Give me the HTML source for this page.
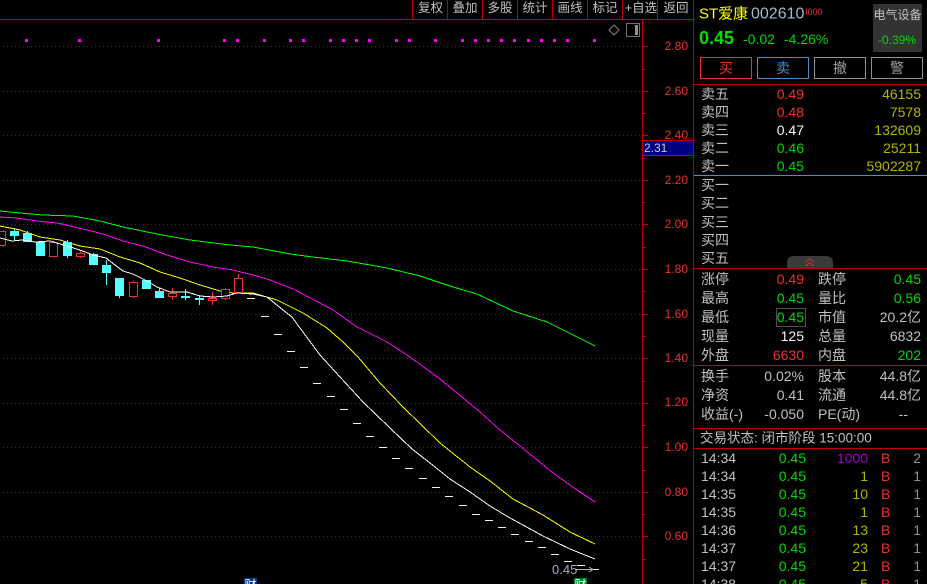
<!DOCTYPE html>
<html><head><meta charset="utf-8"><style>
html,body{margin:0;padding:0;background:#000;width:927px;height:584px;overflow:hidden}
svg{display:block}
text{font-family:"Liberation Sans","Noto Sans CJK SC",sans-serif;font-size:14px;dominant-baseline:central;fill:#c0c0c0}
.r{fill:#f03030}.g{fill:#00d800}.y{fill:#b4b400}.w{fill:#f4f4f4}.e{text-anchor:end}.c{text-anchor:middle}
.ax{font-size:12px;fill:#e83030;text-anchor:end}
.tab{font-size:12.5px;text-anchor:middle}
.l{fill:none;stroke-width:1}
.grid line{stroke:#a00000;stroke-width:1;stroke-dasharray:1 3}
.ln line,.ln path{stroke:#c00000;stroke-width:1}
.up rect{fill:#000;stroke:#f03030;stroke-width:1}
.up line{stroke:#f03030}
.dn rect{fill:#55ffff}
.dn line{stroke:#55ffff}
.d{fill:#f0f0f0}
.m{fill:#ff00ff}
</style></head><body>
<svg width="927" height="584" viewBox="0 0 927 584" shape-rendering="crispEdges">
<rect width="927" height="584" fill="#000"/>
<g class="grid">
<line x1="3" x2="642" y1="46.5" y2="46.5"/><line x1="3" x2="642" y1="91.5" y2="91.5"/><line x1="3" x2="642" y1="135.5" y2="135.5"/><line x1="3" x2="642" y1="180.5" y2="180.5"/><line x1="3" x2="642" y1="224.5" y2="224.5"/><line x1="3" x2="642" y1="269.5" y2="269.5"/><line x1="3" x2="642" y1="314.5" y2="314.5"/><line x1="3" x2="642" y1="358.5" y2="358.5"/><line x1="3" x2="642" y1="403.5" y2="403.5"/><line x1="3" x2="642" y1="447.5" y2="447.5"/><line x1="3" x2="642" y1="492.5" y2="492.5"/><line x1="3" x2="642" y1="536.5" y2="536.5"/>
</g>
<g class="m">
<rect x="25" y="39" width="3" height="3"/><rect x="78" y="39" width="3" height="3"/><rect x="157" y="39" width="3" height="3"/><rect x="223" y="39" width="3" height="3"/><rect x="236" y="39" width="3" height="3"/><rect x="263" y="39" width="3" height="3"/><rect x="289" y="39" width="3" height="3"/><rect x="302" y="39" width="3" height="3"/><rect x="329" y="39" width="3" height="3"/><rect x="342" y="39" width="3" height="3"/><rect x="355" y="39" width="3" height="3"/><rect x="368" y="39" width="3" height="3"/><rect x="395" y="39" width="3" height="3"/><rect x="408" y="39" width="3" height="3"/><rect x="434" y="39" width="3" height="3"/><rect x="461" y="39" width="3" height="3"/><rect x="474" y="39" width="3" height="3"/><rect x="487" y="39" width="3" height="3"/><rect x="500" y="39" width="3" height="3"/><rect x="513" y="39" width="3" height="3"/><rect x="527" y="39" width="3" height="3"/><rect x="540" y="39" width="3" height="3"/><rect x="553" y="39" width="3" height="3"/><rect x="566" y="39" width="3" height="3"/><rect x="593" y="39" width="3" height="3"/>
</g>
<polyline class="l" stroke="#00ff00" points="0,211 20,213 43,215 73,216 100,221 123,227 157,234 190,240 230,245 253,247 280,252 290,254 313,257 347,261 387,268 420,276 453,287 477,294 513,311 547,322 595,346"/>
<polyline class="l" stroke="#ff00ff" points="0,217 17,218 37,221 57,223 83,229 103,234 123,241 143,246 167,255 190,262 213,267 233,270 257,276 270,280 293,289 333,310 357,327 387,342 410,357 440,379 480,412 500,430 525,450 553,473 577,490 595,502"/>
<polyline class="l" stroke="#ffff00" points="0,226 20,230 40,237 60,240 80,246 100,249 120,257 140,263 160,272 180,278 200,285 220,291 233,293 253,293 277,300 303,313 327,328 343,342 358,357 380,383 403,407 440,443 450,451 470,467 490,481 513,499 543,515 570,532 595,544"/>
<g class="up">
<line x1="3.5" x2="3.5" y1="230" y2="247"/><rect x="-4.5" y="231.5" width="10" height="14"/>
<line x1="53.5" x2="53.5" y1="241" y2="257"/><rect x="49.5" y="242.5" width="8" height="14"/>
<line x1="80.5" x2="80.5" y1="251" y2="258"/><rect x="76.5" y="253.5" width="8" height="3"/>
<line x1="133.5" x2="133.5" y1="281" y2="298"/><rect x="129.5" y="282.5" width="8" height="14"/>
<line x1="172.5" x2="172.5" y1="288" y2="300"/><rect x="168.5" y="293.5" width="8" height="3"/>
<line x1="212.5" x2="212.5" y1="292" y2="305"/><rect x="208.5" y="298.5" width="8" height="2"/>
<line x1="225.5" x2="225.5" y1="288" y2="300"/><rect x="221.5" y="289.5" width="8" height="9"/>
<line x1="238.5" x2="238.5" y1="274" y2="278"/><rect x="234.5" y="278.5" width="8" height="14"/>
</g>
<g class="dn">
<line x1="14.5" x2="14.5" y1="228" y2="240"/><rect x="10" y="231" width="9" height="5"/>
<rect x="23" y="233" width="9" height="9"/><line x1="27.5" x2="27.5" y1="231" y2="242"/>
<rect x="36" y="242" width="9" height="14"/>
<line x1="67.5" x2="67.5" y1="240" y2="258"/><rect x="63" y="242" width="9" height="14"/>
<line x1="93.5" x2="93.5" y1="253" y2="265"/><rect x="89" y="254" width="9" height="11"/>
<line x1="106.5" x2="106.5" y1="260" y2="285"/><rect x="102" y="265" width="9" height="8"/>
<line x1="119.5" x2="119.5" y1="278" y2="298"/><rect x="115" y="278" width="9" height="18"/>
<rect x="142" y="280" width="9" height="9"/>
<line x1="159.5" x2="159.5" y1="288" y2="298"/><rect x="155" y="291" width="9" height="7"/>
<line x1="185.5" x2="185.5" y1="289" y2="300"/><rect x="181" y="296" width="9" height="2"/>
<line x1="199.5" x2="199.5" y1="296" y2="305"/><rect x="195" y="298" width="9" height="2"/>
</g>
<polyline class="l" stroke="#ffffff" points="0,238 12,241 22,240 35,242 50,241 67,246 80,250 93,255 106,258 115,265 123,271 133,274 147,281 157,287 170,292 187,292 200,296 213,297 227,296 237,293 253,294 267,297 283,310 292,317 300,328 320,355 340,377 363,402 390,428 412,449 430,463 450,479 470,492 490,506 510,518 543,536 570,549 595,559"/>
<g class="d">
<rect x="247" y="298" width="8" height="1"/><rect x="261" y="316" width="8" height="1"/><rect x="274" y="334" width="8" height="1"/><rect x="287" y="351" width="8" height="1"/><rect x="300" y="367" width="8" height="1"/><rect x="313" y="383" width="8" height="1"/><rect x="327" y="396" width="8" height="1"/><rect x="340" y="409" width="8" height="1"/><rect x="353" y="423" width="8" height="1"/><rect x="366" y="436" width="8" height="1"/><rect x="379" y="447" width="8" height="1"/><rect x="392" y="458" width="8" height="1"/><rect x="405" y="468" width="8" height="1"/><rect x="419" y="478" width="8" height="1"/><rect x="432" y="487" width="8" height="1"/><rect x="445" y="496" width="8" height="1"/><rect x="459" y="505" width="8" height="1"/><rect x="472" y="514" width="8" height="1"/><rect x="485" y="520" width="8" height="1"/><rect x="498" y="527" width="8" height="1"/><rect x="511" y="534" width="8" height="1"/><rect x="525" y="541" width="8" height="1"/><rect x="538" y="547" width="8" height="1"/><rect x="551" y="554" width="8" height="1"/><rect x="564" y="561" width="8" height="1"/><rect x="577" y="565" width="8" height="1"/><rect x="590" y="569" width="9" height="1"/>
</g>
<text x="552" y="569.5" style="font-size:13px;fill:#9fb0c4">0.45</text>
<path d="M575 569.5H592M589 567L593 569.5L589 572" fill="none" stroke="#b0b0b0" stroke-width="1" shape-rendering="auto"/>
<rect x="244" y="578" width="13" height="6" fill="#003a80"/>
<text x="250.5" y="585" class="c" style="font-size:12px;fill:#fff">财</text>
<rect x="574" y="578" width="13" height="6" fill="#008020"/>
<text x="580.5" y="585" class="c" style="font-size:12px;fill:#fff">财</text>

<g class="ln">
<line x1="0" x2="693" y1="19.5" y2="19.5"/>
<line x1="642.5" x2="642.5" y1="19" y2="584"/>
<line x1="693.5" x2="693.5" y1="0" y2="584"/>
<line x1="412.5" x2="412.5" y1="0" y2="19"/><line x1="447.5" x2="447.5" y1="0" y2="19"/><line x1="482.5" x2="482.5" y1="0" y2="19"/><line x1="517.5" x2="517.5" y1="0" y2="19"/><line x1="552.5" x2="552.5" y1="0" y2="19"/><line x1="587.5" x2="587.5" y1="0" y2="19"/><line x1="622.5" x2="622.5" y1="0" y2="19"/><line x1="657.5" x2="657.5" y1="0" y2="19"/>
<line x1="643" x2="648" y1="46.5" y2="46.5"/><line x1="643" x2="646" y1="69.5" y2="69.5"/><line x1="643" x2="648" y1="91.5" y2="91.5"/><line x1="643" x2="646" y1="113.5" y2="113.5"/><line x1="643" x2="648" y1="135.5" y2="135.5"/><line x1="643" x2="646" y1="158.5" y2="158.5"/><line x1="643" x2="648" y1="180.5" y2="180.5"/><line x1="643" x2="646" y1="202.5" y2="202.5"/><line x1="643" x2="648" y1="224.5" y2="224.5"/><line x1="643" x2="646" y1="247.5" y2="247.5"/><line x1="643" x2="648" y1="269.5" y2="269.5"/><line x1="643" x2="646" y1="291.5" y2="291.5"/><line x1="643" x2="648" y1="314.5" y2="314.5"/><line x1="643" x2="646" y1="336.5" y2="336.5"/><line x1="643" x2="648" y1="358.5" y2="358.5"/><line x1="643" x2="646" y1="381.5" y2="381.5"/><line x1="643" x2="648" y1="403.5" y2="403.5"/><line x1="643" x2="646" y1="425.5" y2="425.5"/><line x1="643" x2="648" y1="447.5" y2="447.5"/><line x1="643" x2="646" y1="470.5" y2="470.5"/><line x1="643" x2="648" y1="492.5" y2="492.5"/><line x1="643" x2="646" y1="514.5" y2="514.5"/><line x1="643" x2="648" y1="536.5" y2="536.5"/><line x1="643" x2="646" y1="559.5" y2="559.5"/>
<line x1="694" x2="927" y1="84.5" y2="84.5"/>
<line x1="694" x2="927" y1="268.5" y2="268.5"/>
<line x1="694" x2="927" y1="365.5" y2="365.5"/>
<line x1="694" x2="927" y1="428.5" y2="428.5"/>
<line x1="694" x2="927" y1="448.5" y2="448.5"/>
</g>
<line x1="694" x2="927" y1="175.5" y2="175.5" stroke="#4a90c8"/>
<text class="tab" x="430.5" y="8">复权</text><text class="tab" x="465" y="8">叠加</text><text class="tab" x="500" y="8">多股</text><text class="tab" x="535" y="8">统计</text><text class="tab" x="570" y="8">画线</text><text class="tab" x="605" y="8">标记</text><text class="tab" x="641" y="8">+自选</text><text class="tab" x="676" y="8">返回</text>
<path d="M614 25L619 30L614 35L609 30Z" fill="none" stroke="#808080" shape-rendering="auto"/>
<rect x="626.5" y="23.5" width="13" height="13" fill="none" stroke="#707070"/><rect x="635" y="25" width="3" height="10" fill="#909090"/>
<text class="ax" x="688" y="46">2.80</text><text class="ax" x="688" y="91">2.60</text><text class="ax" x="688" y="135">2.40</text><text class="ax" x="688" y="180">2.20</text><text class="ax" x="688" y="224">2.00</text><text class="ax" x="688" y="269">1.80</text><text class="ax" x="688" y="314">1.60</text><text class="ax" x="688" y="358">1.40</text><text class="ax" x="688" y="402">1.20</text><text class="ax" x="688" y="447">1.00</text><text class="ax" x="688" y="492">0.80</text><text class="ax" x="688" y="536">0.60</text>
<rect x="643" y="140" width="50" height="16" fill="#000080"/>
<line x1="643" x2="693" y1="140.5" y2="140.5" stroke="#c00000"/><line x1="643" x2="693" y1="155.5" y2="155.5" stroke="#c00000"/>
<text x="644" y="148" style="font-size:12px;fill:#c8c8e0">2.31</text>

<text x="699" y="14" style="fill:#ffff00;font-size:15px">ST爱康</text>
<text x="751" y="14" style="fill:#a8b8cc;font-size:16px">002610</text>
<text x="805" y="12" style="fill:#f03030;font-size:9px">I000</text>
<text x="699" y="38" style="fill:#00e000;font-size:18px;font-weight:bold">0.45</text>
<text x="743" y="39" class="g" style="font-size:14px">-0.02</text>
<text x="784" y="39" class="g" style="font-size:14px">-4.26%</text>
<rect x="873" y="4" width="49" height="48" fill="#333"/>
<text x="897.5" y="15" class="c" style="font-size:12px;fill:#c0c0c0">电气设备</text>
<text x="897" y="40" class="c g" style="font-size:12px">-0.39%</text>
<rect x="700.5" y="57.5" width="51" height="21" fill="none" stroke="#f03030"/><text x="726" y="68" class="c r">买</text>
<rect x="757.5" y="57.5" width="51" height="21" fill="none" stroke="#4a90c8"/><text x="783" y="68" class="c" style="fill:#4a90c8">卖</text>
<rect x="814.5" y="57.5" width="51" height="21" fill="none" stroke="#909090"/><text x="840" y="68" class="c" style="fill:#a0a0a0">撤</text>
<rect x="871.5" y="57.5" width="51" height="21" fill="none" stroke="#909090"/><text x="897" y="68" class="c" style="fill:#a0a0a0">警</text>

<text x="701" y="94">卖五</text><text x="804" y="94" class="e r">0.49</text><text x="921" y="94" class="e y">46155</text>
<text x="701" y="112">卖四</text><text x="804" y="112" class="e r">0.48</text><text x="921" y="112" class="e y">7578</text>
<text x="701" y="130">卖三</text><text x="804" y="130" class="e w">0.47</text><text x="921" y="130" class="e y">132609</text>
<text x="701" y="148">卖二</text><text x="804" y="148" class="e g">0.46</text><text x="921" y="148" class="e y">25211</text>
<text x="701" y="166">卖一</text><text x="804" y="166" class="e g">0.45</text><text x="921" y="166" class="e y">5902287</text>
<text x="701" y="185">买一</text><text x="701" y="203">买二</text><text x="701" y="222">买三</text><text x="701" y="240">买四</text><text x="701" y="258">买五</text>
<path d="M787 268V263Q787 256 794 256H826Q833 256 833 263V268Z" fill="#3a3a3a" shape-rendering="auto"/>
<path d="M805 262L809.500 259L814 262M805 266L809.500 263L814 266" fill="none" stroke="#e03030" shape-rendering="auto"/>

<text x="701" y="279">涨停</text><text x="804" y="279" class="e r">0.49</text><text x="818" y="279">跌停</text><text x="921" y="279" class="e g">0.45</text>
<text x="701" y="298">最高</text><text x="804" y="298" class="e g">0.45</text><text x="818" y="298">量比</text><text x="921" y="298" class="e g">0.56</text>
<text x="701" y="317">最低</text><rect x="776.500" y="308.500" width="29" height="18" fill="none" stroke="#505050"/><text x="804" y="317" class="e g">0.45</text><text x="818" y="317">市值</text><text x="921" y="317" class="e">20.2亿</text>
<text x="701" y="336">现量</text><text x="804" y="336" class="e w">125</text><text x="818" y="336">总量</text><text x="921" y="336" class="e">6832</text>
<text x="701" y="355">外盘</text><text x="804" y="355" class="e r">6630</text><text x="818" y="355">内盘</text><text x="921" y="355" class="e g">202</text>
<text x="701" y="376">换手</text><text x="804" y="376" class="e">0.02%</text><text x="818" y="376">股本</text><text x="921" y="376" class="e">44.8亿</text>
<text x="701" y="395">净资</text><text x="804" y="395" class="e">0.41</text><text x="818" y="395">流通</text><text x="921" y="395" class="e">44.8亿</text>
<text x="701" y="414">收益(-)</text><text x="804" y="414" class="e">-0.050</text><text x="818" y="414">PE(动)</text><text x="908" y="414" class="e">--</text>
<text x="700" y="438" style="font-size:13.5px">交易状态: 闭市阶段 15:00:00</text>
<text x="701" y="458">14:34</text><text x="806" y="458" class="e g">0.45</text><text x="868" y="458" class="e" style="fill:#a000d0">1000</text><text x="881" y="458" class="r">B</text><text x="921" y="458" class="e" style="fill:#909090">2</text>
<text x="701" y="476">14:34</text><text x="806" y="476" class="e g">0.45</text><text x="868" y="476" class="e y">1</text><text x="881" y="476" class="r">B</text><text x="921" y="476" class="e" style="fill:#909090">1</text>
<text x="701" y="494">14:35</text><text x="806" y="494" class="e g">0.45</text><text x="868" y="494" class="e y">10</text><text x="881" y="494" class="r">B</text><text x="921" y="494" class="e" style="fill:#909090">1</text>
<text x="701" y="512">14:35</text><text x="806" y="512" class="e g">0.45</text><text x="868" y="512" class="e y">1</text><text x="881" y="512" class="r">B</text><text x="921" y="512" class="e" style="fill:#909090">1</text>
<text x="701" y="530">14:36</text><text x="806" y="530" class="e g">0.45</text><text x="868" y="530" class="e y">13</text><text x="881" y="530" class="r">B</text><text x="921" y="530" class="e" style="fill:#909090">1</text>
<text x="701" y="548">14:37</text><text x="806" y="548" class="e g">0.45</text><text x="868" y="548" class="e y">23</text><text x="881" y="548" class="r">B</text><text x="921" y="548" class="e" style="fill:#909090">1</text>
<text x="701" y="566">14:37</text><text x="806" y="566" class="e g">0.45</text><text x="868" y="566" class="e y">21</text><text x="881" y="566" class="r">B</text><text x="921" y="566" class="e" style="fill:#909090">1</text>
<text x="701" y="584">14:38</text><text x="806" y="584" class="e g">0.45</text><text x="868" y="584" class="e y">5</text><text x="881" y="584" class="r">B</text><text x="921" y="584" class="e" style="fill:#909090">1</text>
</svg>
</body></html>
